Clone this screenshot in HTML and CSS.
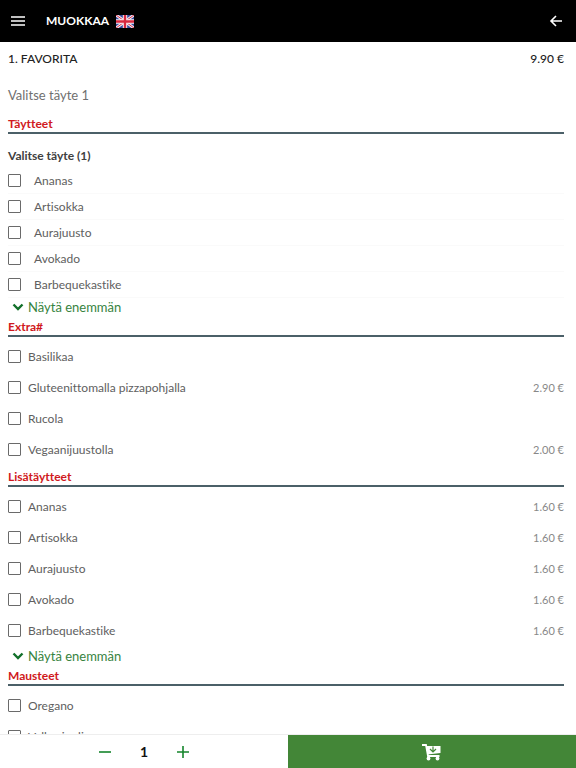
FILE: index.html
```html
<!DOCTYPE html>
<html lang="fi">
<head>
<meta charset="utf-8">
<meta name="viewport" content="width=device-width, initial-scale=1">
<title>Muokkaa</title>
<link rel="stylesheet" href="styles.css">
</head>
<body>
<header class="topbar">
  <button class="icon-btn" type="button" aria-label="Valikko">
    <svg width="14" height="12" viewBox="0 0 14 12"><path d="M0 2h14M0 6h14M0 10h14" stroke="#fff" stroke-width="1.6"/></svg>
  </button>
  <h1 class="topbar-title">MUOKKAA</h1>
  <a class="flag" href="#" aria-label="English">
    <svg width="18" height="13" viewBox="0 0 18 13"><path fill="#34499c" d="M0 0h18v13H0z"/><path d="M0 0l18 13M18 0L0 13" stroke="#f3e8f0" stroke-width="3"/><path d="M0 0l18 13M18 0L0 13" stroke="#d8364d" stroke-width="1"/><path d="M9 0v13M0 6.500h18" stroke="#f8eef2" stroke-width="4.400"/><path d="M9 0v13M0 6.500h18" stroke="#d8283f" stroke-width="2.400"/></svg>
  </a>
  <a class="back" href="#" aria-label="Takaisin">
    <svg width="14" height="14" viewBox="0 0 14 14" fill="none" stroke="#fff" stroke-width="1.600"><path d="M13 7H2M7 2L2 7L7 12"/></svg>
  </a>
</header>
<main class="content">
  <div class="product"><h2>1. FAVORITA</h2><span>9.90 €</span></div>
  <p class="description">Valitse täyte 1</p>

  <section>
    <h3 class="heading">Täytteet</h3>
    <h4 class="subheading">Valitse täyte (1)</h4>
    <ul class="options compact">
      <li><label><input type="checkbox"><span>Ananas</span></label></li>
      <li><label><input type="checkbox"><span>Artisokka</span></label></li>
      <li><label><input type="checkbox"><span>Aurajuusto</span></label></li>
      <li><label><input type="checkbox"><span>Avokado</span></label></li>
      <li><label><input type="checkbox"><span>Barbequekastike</span></label></li>
    </ul>
    <button class="more" type="button"><svg width="12" height="8" viewBox="0 0 12 8"><path d="M1.500 1.500L6 6L10.500 1.500" fill="none" stroke="#12702a" stroke-width="2.400"/></svg>Näytä enemmän</button>
  </section>

  <section>
    <h3 class="heading">Extra#</h3>
    <ul class="options">
      <li><label><input type="checkbox"><span>Basilikaa</span></label></li>
      <li><label><input type="checkbox"><span>Gluteenittomalla pizzapohjalla</span></label><span class="price">2.90 €</span></li>
      <li><label><input type="checkbox"><span>Rucola</span></label></li>
      <li><label><input type="checkbox"><span>Vegaanijuustolla</span></label><span class="price">2.00 €</span></li>
    </ul>
  </section>

  <section>
    <h3 class="heading">Lisätäytteet</h3>
    <ul class="options">
      <li><label><input type="checkbox"><span>Ananas</span></label><span class="price">1.60 €</span></li>
      <li><label><input type="checkbox"><span>Artisokka</span></label><span class="price">1.60 €</span></li>
      <li><label><input type="checkbox"><span>Aurajuusto</span></label><span class="price">1.60 €</span></li>
      <li><label><input type="checkbox"><span>Avokado</span></label><span class="price">1.60 €</span></li>
      <li><label><input type="checkbox"><span>Barbequekastike</span></label><span class="price">1.60 €</span></li>
    </ul>
    <button class="more" type="button"><svg width="12" height="8" viewBox="0 0 12 8"><path d="M1.500 1.500L6 6L10.500 1.500" fill="none" stroke="#12702a" stroke-width="2.400"/></svg>Näytä enemmän</button>
  </section>

  <section>
    <h3 class="heading">Mausteet</h3>
    <ul class="options">
      <li><label><input type="checkbox"><span>Oregano</span></label></li>
      <li><label><input type="checkbox"><span>Valkosipuli</span></label></li>
    </ul>
  </section>
</main>
<footer class="bottombar">
  <div class="quantity">
    <button class="icon-btn" type="button" aria-label="Vähennä"><svg width="14" height="14" viewBox="0 0 14 14"><path d="M1 7h12" stroke="#16852c" stroke-width="1.600"/></svg></button>
    <output>1</output>
    <button class="icon-btn" type="button" aria-label="Lisää"><svg width="14" height="14" viewBox="0 0 14 14"><path d="M1 7h12M7 1v12" stroke="#16852c" stroke-width="1.600"/></svg></button>
  </div>
  <button class="add" type="button" aria-label="Lisää ostoskoriin">
    <svg width="20" height="18" viewBox="0 0 20 18"><path d="M0 2h4l2 11h11.500" fill="none" stroke="#fff" stroke-width="1.800"/><path d="M4 3H18.500v7l-13 1.500z" fill="#fff"/><circle cx="6.500" cy="15.500" r="1.900" fill="#fff"/><circle cx="15.500" cy="15.500" r="1.900" fill="#fff"/><path d="M11 3.500v5.500M8 6l3 3l3-3" fill="none" stroke="#438637" stroke-width="1.200"/></svg>
  </button>
</footer>
</body>
</html>
```
FILE: styles.css
```css
* { box-sizing: border-box; }

body {
  display: flex;
  flex-direction: column;
  height: 100vh;
  margin: 0;
  background: #fff;
  color: #606060;
  font: 12px/18px Lato, "Liberation Sans", sans-serif;
  font-variant-ligatures: none;
}

h1, h2, h3, h4, p, ul { margin: 0; padding: 0; }
ul { list-style: none; }
svg { display: block; }

button {
  padding: 0;
  border: 0;
  background: none;
  font: inherit;
  cursor: pointer;
}

.topbar {
  display: flex;
  flex: none;
  align-items: center;
  height: 42px;
  padding: 0 13px 0 11px;
  background: #000;
}

.topbar-title {
  margin-left: 21px;
  color: #fff;
  font-size: 12px;
  font-weight: 700;
}

.flag { margin-left: 7px; }
.back { margin-left: auto; }

.content {
  flex: 1;
  min-height: 0;
  padding: 0 12px 0 8px;
  overflow-y: auto;
  scrollbar-width: none;
}

.product {
  display: flex;
  justify-content: space-between;
  padding: 8px 0;
  color: #222;
}

.product h2,
.product span {
  font-size: 12px;
  font-weight: 500;
}

.description {
  padding: 10px 0 9px;
  font-size: 13px;
  color: #707070;
}

.heading {
  height: 21px;
  padding-top: 2px;
  border-bottom: 2px solid #4b6068;
  color: #d01820;
  font-size: 12px;
  font-weight: 700;
}

.subheading {
  padding: 13px 0 3px;
  color: #404040;
  font-size: 12px;
  font-weight: 700;
}

.options { padding: 4px 0 1px; }

.options li {
  display: flex;
  align-items: center;
  justify-content: space-between;
  height: 31px;
}

.options label {
  display: flex;
  align-items: center;
  gap: 7px;
  font-size: 12px;
}

.options input {
  appearance: none;
  width: 13px;
  height: 13px;
  margin: 0;
  border: 1px solid #6a6a6a;
  border-radius: 1px;
  background: #fff;
}

.options input:checked { background: #438637; }

.compact { padding: 0; }

.compact li {
  height: 26px;
  border-bottom: 1px solid #fafafa;
}

.compact label { gap: 13px; }

.price {
  color: #888;
  font-size: 11px;
}

.more {
  display: flex;
  align-items: center;
  gap: 4px;
  height: 18px;
  padding-left: 4px;
  color: #368340;
  font-size: 13px;
}

.bottombar {
  display: flex;
  flex: none;
  height: 34px;
  border-top: 1px solid #eee;
}

.quantity {
  display: flex;
  flex: 1;
  align-items: center;
  justify-content: center;
  gap: 28px;
}

.quantity output {
  color: #111;
  font-size: 14px;
  font-weight: 700;
}

.add {
  display: flex;
  flex: 1;
  align-items: center;
  justify-content: center;
  background: #438637;
}
```
